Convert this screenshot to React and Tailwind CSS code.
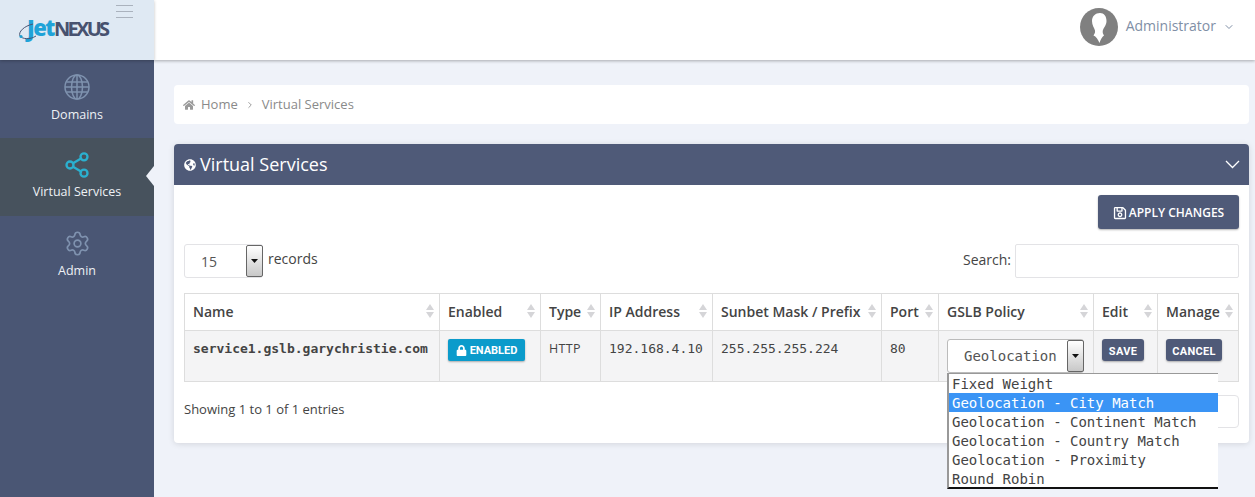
import React from "react";
import { Settings, Share2, ChevronDown, ChevronRight } from "lucide-react";
import { FaHome, FaGlobeAmericas, FaRegSave, FaLock } from "react-icons/fa";

const Sort = () => (
  <span className="flex flex-col gap-[2px] shrink-0 text-[#d5d5d8]">
    <svg width="8" height="6" viewBox="0 0 8 6" fill="currentColor"><path d="M4 0 8 6H0z" /></svg>
    <svg width="8" height="6" viewBox="0 0 8 6" fill="currentColor"><path d="M4 6 0 0h8z" /></svg>
  </span>
);

const cols = [
  ["Name", "w-[255px]"],
  ["Enabled", "w-[101px]"],
  ["Type", "w-[60px]"],
  ["IP Address", "w-[112px]"],
  ["Sunbet Mask / Prefix", "w-[169px]"],
  ["Port", "w-[57px]"],
  ["GSLB Policy", "w-[155px]"],
  ["Edit", "w-[64px]"],
  ["Manage", "w-[81px]"],
];

const mono = "font-['DejaVu_Sans_Mono','Liberation_Mono',monospace]";

const SelectArrow = ({ className }) => (
  <span className={`flex items-center justify-center border border-[#666] rounded-[2px] bg-gradient-to-b from-white to-[#c8c8c8] ${className}`}>
    <svg width="7" height="4" viewBox="0 0 7 4" fill="#111"><path d="M0 0h7L3.500 4z" /></svg>
  </span>
);

const Globe = () => (
  <svg width="26" height="26" viewBox="0 0 26 26" fill="none" stroke="#7f92af" strokeWidth="1.500">
    <circle cx="13" cy="13" r="12" />
    <ellipse cx="13" cy="13" rx="5.500" ry="12" />
    <path d="M13 1v24M2.500 8h21M1 13h24M2.500 18h21" />
  </svg>
);

const NavItem = ({ icon, label, active }) => (
  <div className={`relative h-[78px] flex flex-col items-center pt-[13px] ${active ? "bg-[#47525d]" : ""}`}>
    <div className="h-[28px] flex items-center justify-center">{icon}</div>
    <div className={`${active ? "mt-[4px]" : "mt-[5px]"} text-[12.5px] leading-[18px] text-[#eef1f5]`}>{label}</div>
    {active && (
      <svg className="absolute right-0 top-[28px]" width="8" height="20" viewBox="0 0 8 20" fill="#eff2f9"><path d="M8 0v20L0 10z" /></svg>
    )}
  </div>
);

export default function App() {
  return (
    <div className="flex h-[497px] w-[1255px] overflow-hidden bg-[#eff2f9] font-['Open_Sans',sans-serif] text-[#444]">
      <aside className="w-[154px] shrink-0 flex flex-col bg-[#4a5674]">
        <div className="relative h-[60px] bg-[#dfe9f3] shadow-[0_1px_3px_rgba(0,0,0,0.25)] z-10">
          <div className="absolute left-[18px] top-[14px] flex items-baseline">
            <svg className="absolute left-0 top-[9px]" width="20" height="20" viewBox="0 0 20 20" fill="none" stroke="#4a5674" strokeWidth="1">
              <path d="M15 1C6 3 0 9 2 13c2 3 10 4 16 0" />
              <circle cx="3" cy="13.500" r="1.600" fill="#1f9fd0" stroke="none" />
            </svg>
            <span className="ml-[9px] text-[22px] leading-[26px] font-extrabold text-[#1fa3d8] tracking-[-1.500px]">Jet</span>
            <span className="text-[20px] leading-[26px] font-bold text-[#47526f] tracking-[-2.700px]">NEXUS</span>
          </div>
          <div className="absolute left-[116px] top-[5px] flex flex-col gap-[5px]">
            <div className="w-[17px] h-px bg-[#aab2bd]" />
            <div className="w-[17px] h-px bg-[#aab2bd]" />
            <div className="w-[17px] h-px bg-[#aab2bd]" />
          </div>
        </div>
        <NavItem icon={<Globe />} label="Domains" />
        <NavItem icon={<Share2 size={28} color="#2bb0cf" strokeWidth={2} />} label="Virtual Services" active />
        <NavItem icon={<Settings size={27} color="#7f92af" strokeWidth={1.500} />} label="Admin" />
      </aside>

      <div className="flex-1 min-w-0 flex flex-col">
        <header className="h-[60px] shrink-0 bg-white shadow-[0_1px_3px_rgba(0,0,0,0.3)] flex items-center justify-end pr-[20px] pb-[6px]">
          <svg width="38" height="38" viewBox="0 0 38 38" className="mt-[-1px]">
            <circle cx="19" cy="19" r="19" fill="#808080" />
            <path d="M20 5c-4.500 0-8 3-8 8 0 4 2 6.500 3 9.500.4 2-.6 3.500-1.500 5 2.500 1 4.500 4 6 7.500 1.200-3.500 2.500-6 4.500-7.500-1-1.500-1.600-3-1.200-5 1-3 3.700-5.500 3.700-9.500 0-5-2.500-8-6.500-8z" fill="#fff" />
          </svg>
          <span className="ml-[8px] mt-[-4px] text-[14px] text-[#7f8fa6]">Administrator</span>
          <ChevronDown size={12} className="ml-[7px] text-[#7f8fa6]" />
        </header>

        <main className="pl-[20px] pr-[6px] pt-[25px]">
          <nav className="h-[39px] rounded-[4px] bg-white flex items-center pl-[9px] text-[13px] text-[#8a8a8a]">
            <FaHome size={12} className="text-[#9a9a9a]" />
            <span className="ml-[6px]">Home</span>
            <ChevronRight size={10} className="mx-[7px]" />
            <span>Virtual Services</span>
          </nav>

          <section className="mt-[20px] h-[299px] rounded-[4px] bg-white shadow-[0_1px_6px_rgba(0,0,0,0.12)]">
            <div className="h-[41px] rounded-t-[4px] bg-[#4f5a78] flex items-center pl-[10px] pr-[9px] text-white">
              <FaGlobeAmericas size={12} />
              <h2 className="ml-[4px] mt-[-2px] text-[18px] leading-none flex-1">Virtual Services</h2>
              <svg width="15" height="9" viewBox="0 0 15 9" fill="none" stroke="#fff" strokeWidth="1.300"><path d="M1 1l6.500 6.500L14 1" /></svg>
            </div>

            <div className="px-[10px]">
              <div className="flex justify-end pt-[10px]">
                <button className="h-[34px] w-[141px] pt-[2px] rounded-[3px] bg-[#4f5a78] text-white text-[12px] font-semibold flex items-center justify-center gap-[2px] shadow-[0_1px_2px_rgba(0,0,0,0.3)]">
                  <FaRegSave size={14} />
                  APPLY CHANGES
                </button>
              </div>

              <div className="flex items-start justify-between mt-[15px] h-[34px]">
                <div className="flex items-start">
                  <div className="relative h-[34px] w-[79px] rounded-[3px] border border-[#e3e3e6] bg-white text-[14px] pl-[16px] leading-[34px] text-[#555]">
                    15
                    <SelectArrow className="absolute right-[-1px] top-0 h-[32px] w-[17px]" />
                  </div>
                  <span className="ml-[5px] text-[14px] leading-[30px]">records</span>
                </div>
                <div className="flex items-center">
                  <span className="text-[14px] mt-[-4px] mr-[4px]">Search:</span>
                  <div className="h-[34px] w-[224px] rounded-[2px] border border-[#e3e3e6] bg-white" />
                </div>
              </div>

              <table className="mt-[15px] w-[1054px] table-fixed border-collapse border border-[#ddd] text-[13px]">
                <thead>
                  <tr className="h-[37px]">
                    {cols.map(([name, w]) => (
                      <th key={name} className={`${w} border border-[#ddd] pl-[8px] pr-[5px] pb-[2px] text-left font-semibold text-[14px] text-[#444]`}>
                        <div className="flex items-center justify-between">
                          <span className="whitespace-nowrap">{name}</span>
                          <Sort />
                        </div>
                      </th>
                    ))}
                  </tr>
                </thead>
                <tbody>
                  <tr className="h-[51px] bg-[#f4f4f5] align-top">
                    <td className={`border border-[#ddd] pl-[8px] pt-[9px] font-bold text-[13px] leading-[17px] whitespace-nowrap text-[#444] ${mono}`}>service1.gslb.garychristie.com</td>
                    <td className="border border-[#ddd] pl-[8px] pt-[8px]">
                      <span className="flex h-[22px] w-[77px] items-center justify-center gap-[3px] rounded-[2px] bg-[#0b9bcb] text-white text-[11px] font-bold font-['Roboto',sans-serif] shadow-[0_1px_2px_rgba(0,0,0,0.3)]">
                        <FaLock size={11} />
                        <span className="mt-[3px]">ENABLED</span>
                      </span>
                    </td>
                    <td className="border border-[#ddd] pl-[8px] pt-[9px] leading-[17px] text-[12.500px] tracking-[0.300px]">HTTP</td>
                    <td className={`border border-[#ddd] pl-[8px] pt-[9px] leading-[17px] text-[13px] whitespace-nowrap ${mono}`}>192.168.4.10</td>
                    <td className={`border border-[#ddd] pl-[8px] pt-[9px] leading-[17px] text-[13px] whitespace-nowrap ${mono}`}>255.255.255.224</td>
                    <td className={`border border-[#ddd] pl-[8px] pt-[9px] leading-[17px] text-[13px] ${mono}`}>80</td>
                    <td className="border border-[#ddd] pl-[8px] pt-[8px] relative">
                      <div className={`relative h-[34px] w-[137px] rounded-[3px] border border-[#bbb] bg-white pl-[16px] text-[14px] leading-[33px] text-[#555] ${mono}`}>
                        Geolocation
                        <SelectArrow className="absolute right-[-1px] top-0 h-[32px] w-[17px]" />
                      </div>
                    </td>
                    <td className="border border-[#ddd] pl-[8px] pt-[8px]">
                      <span className="flex h-[22px] w-[42px] pt-[4px] items-center justify-center rounded-[3px] bg-[#4f5a78] text-white text-[11px] font-bold font-['Roboto',sans-serif] tracking-[0.300px] shadow-[0_1px_2px_rgba(0,0,0,0.3)]">SAVE</span>
                    </td>
                    <td className="border border-[#ddd] pl-[8px] pt-[8px]">
                      <span className="flex h-[22px] w-[56px] pt-[4px] items-center justify-center rounded-[3px] bg-[#4f5a78] text-white text-[11px] font-bold font-['Roboto',sans-serif] tracking-[0.300px] shadow-[0_1px_2px_rgba(0,0,0,0.3)]">CANCEL</span>
                    </td>
                  </tr>
                </tbody>
              </table>

              <div className="relative mt-[13px] flex items-start justify-between">
                <span className="mt-[5px] text-[13px] leading-[18px]">Showing 1 to 1 of 1 entries</span>
                <div className="h-[33px] w-[30px] rounded-r-[4px] border border-[#e3e3e6] bg-white" />
                <div className={`absolute left-[763px] top-[-22px] w-[271px] h-[116px] bg-white border-l-2 border-l-[#999] border-t border-t-[#999] border-b-2 border-b-[#111] text-[14px] leading-[21px] text-[#444] ${mono}`}>
                  {["Fixed Weight", "Geolocation - City Match", "Geolocation - Continent Match", "Geolocation - Country Match", "Geolocation - Proximity", "Round Robin"].map((o, i) => (
                    <div key={o} className={`pl-[3px] h-[19px] whitespace-nowrap ${i === 1 ? "bg-[#3a94f5] text-white" : ""}`}>{o}</div>
                  ))}
                </div>
              </div>
            </div>
          </section>
        </main>
      </div>
    </div>
  );
}
